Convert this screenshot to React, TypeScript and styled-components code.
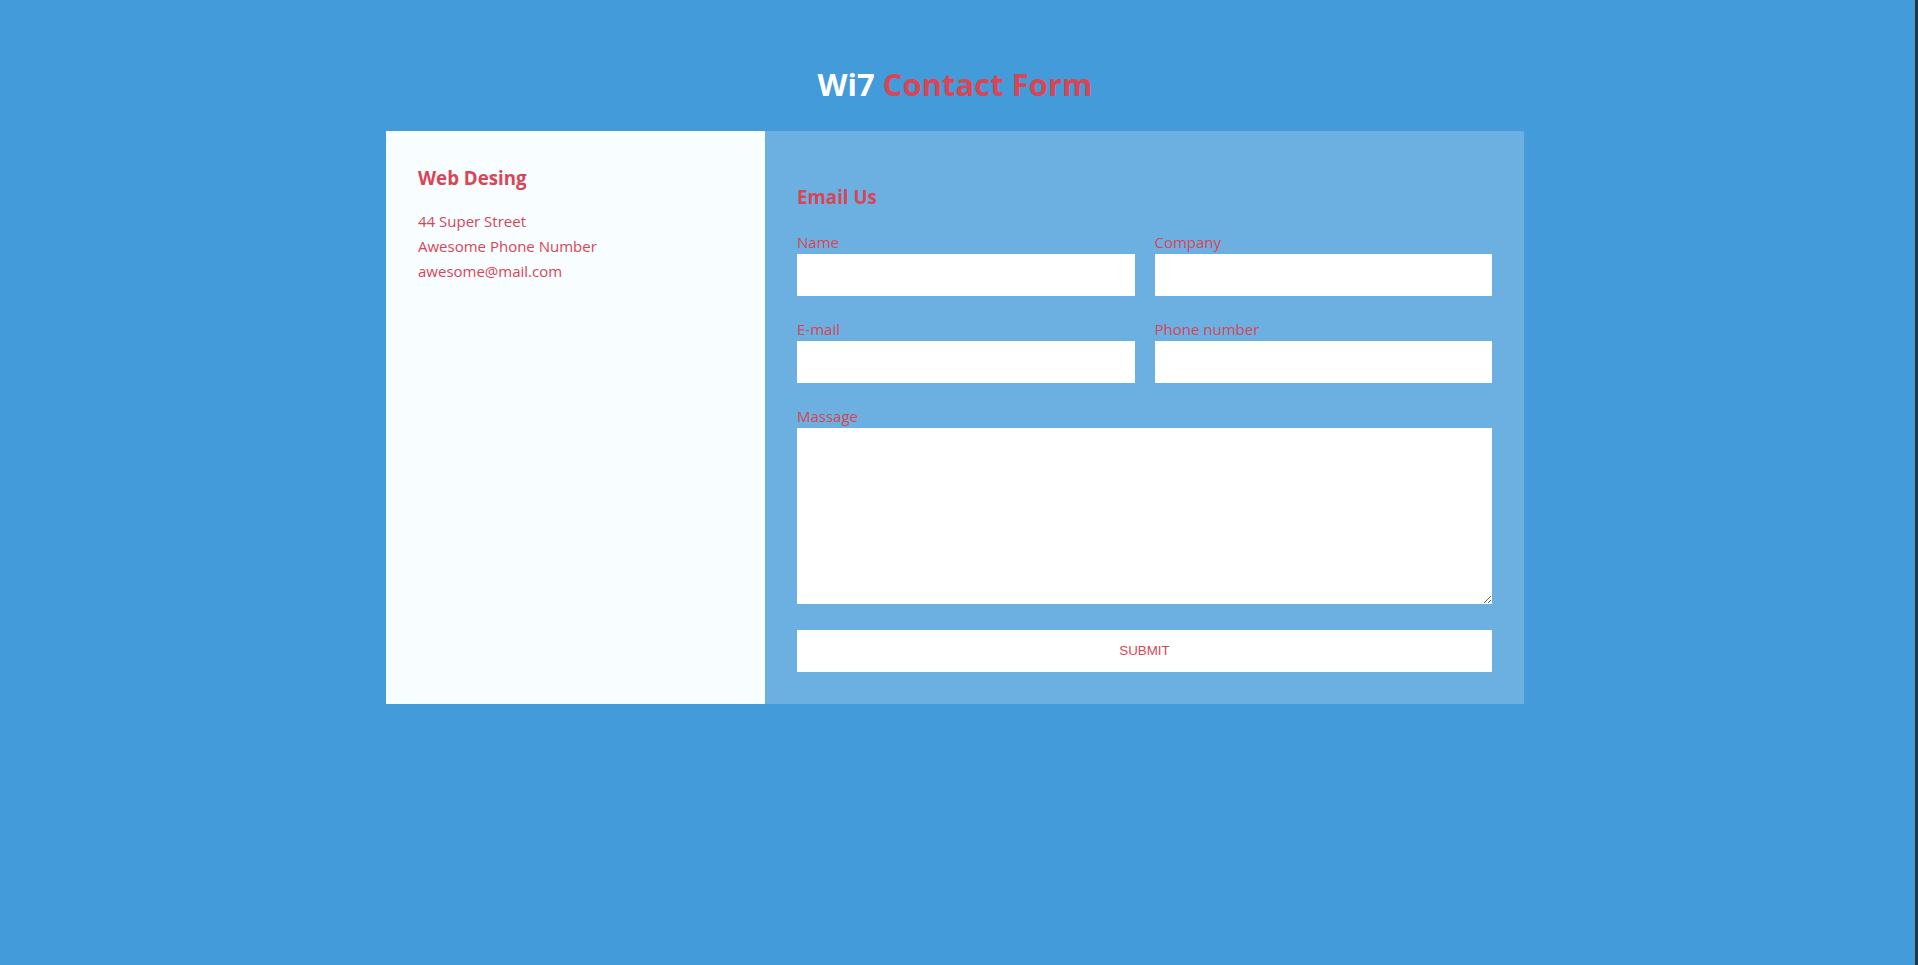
import styled, { createGlobalStyle } from 'styled-components';

const GlobalStyle = createGlobalStyle`
    html, body {
        margin: 0;
        padding: 0;
        background: #439bd9;
    }
    * {
        box-sizing: border-box;
    }
`;

const Page = styled.div`
    min-height: 100vh;
    padding: 62px 5px 0 0;
    border-right: 3px solid #29343f;
    font-family: 'Open Sans', 'Noto Sans', sans-serif;
    color: #da4556;
`;

const Title = styled.h1`
    margin: 0 0 25px;
    font-size: 31px;
    line-height: 44px;
    font-weight: 700;
    text-align: center;
    color: #da4556;
`;

const Brand = styled.span`
    color: #fff;
`;

const Card = styled.div`
    display: grid;
    grid-template-columns: 379px 759px;
    width: 1138px;
    margin: 0 auto;
`;

const InfoPanel = styled.div`
    background: #f8fdff;
    padding: 34px 32px 32px;
`;

const Heading = styled.h3<{ spaced?: boolean }>`
    margin: ${({ spaced }) => (spaced ? '19px 0 21px' : '0 0 18px')};
    font-size: 18.72px;
    line-height: 25.5px;
    font-weight: 700;
`;

const InfoList = styled.ul`
    list-style: none;
    margin: 0;
    padding: 0;
    font-size: 15px;
    line-height: 25px;
`;

const FormPanel = styled.div`
    background: #6cb0e1;
    padding: 34px 32px 32px;
`;

const Form = styled.form`
    display: grid;
    grid-template-columns: 1fr 1fr;
    column-gap: 20px;
    row-gap: 22px;
`;

const Field = styled.p<{ full?: boolean }>`
    margin: 0;
    display: flex;
    flex-direction: column;
    grid-column: ${({ full }) => (full ? '1 / span 2' : 'auto')};
`;

const Label = styled.label`
    font-size: 15px;
    line-height: 23px;
    color: #da4556;
`;

const Input = styled.input`
    height: 42px;
    width: 100%;
    border: none;
    background: #fff;
    outline: none;
`;

const TextArea = styled.textarea`
    display: block;
    height: 176px;
    width: 100%;
    border: none;
    background: #fff;
    outline: none;
`;

const Submit = styled.button`
    grid-column: 1 / span 2;
    margin-top: 4px;
    height: 42px;
    width: 100%;
    border: none;
    background: #fff;
    color: #da4556;
    font-family: 'Liberation Sans', Arial, sans-serif;
    font-size: 13.33px;
    text-transform: uppercase;
    cursor: pointer;
`;

const App = () => {
    return (
        <>
            <GlobalStyle />
            <Page>
                <Title>
                    <Brand>Wi7</Brand> Contact Form
                </Title>
                <Card>
                    <InfoPanel>
                        <Heading>Web Desing</Heading>
                        <InfoList>
                            <li>44 Super Street</li>
                            <li>Awesome Phone Number</li>
                            <li>awesome@mail.com</li>
                        </InfoList>
                    </InfoPanel>
                    <FormPanel>
                        <Heading spaced>Email Us</Heading>
                        <Form onSubmit={(e) => e.preventDefault()}>
                            <Field>
                                <Label>Name</Label>
                                <Input type="text" name="name" />
                            </Field>
                            <Field>
                                <Label>Company</Label>
                                <Input type="text" name="company" />
                            </Field>
                            <Field>
                                <Label>E-mail</Label>
                                <Input type="email" name="email" />
                            </Field>
                            <Field>
                                <Label>Phone number</Label>
                                <Input type="text" name="phone" />
                            </Field>
                            <Field full>
                                <Label>Massage</Label>
                                <TextArea name="message" />
                            </Field>
                            <Submit type="submit">Submit</Submit>
                        </Form>
                    </FormPanel>
                </Card>
            </Page>
        </>
    );
};

export default App;
